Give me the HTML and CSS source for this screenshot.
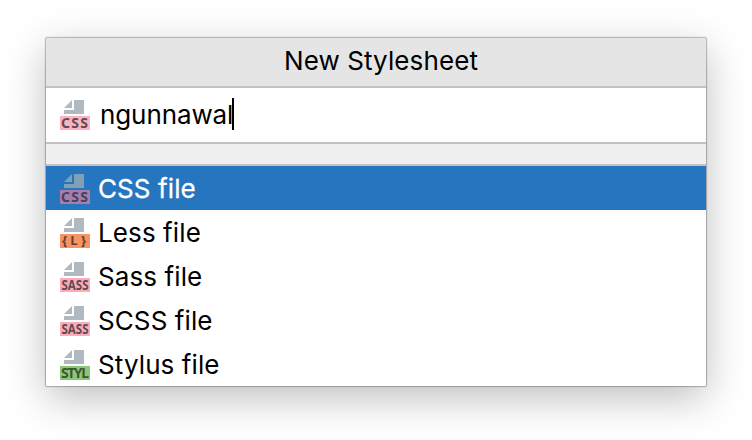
FILE: index.html
```html
<!DOCTYPE html>
<html lang="en">
<head>
<meta charset="utf-8">
<title>New Stylesheet</title>
<link rel="stylesheet" href="styles.css">
</head>
<body>
<svg width="0" height="0" class="defs" aria-hidden="true">
  <symbol id="page" viewBox="0 0 30 16"><path d="M14 0H24V14H4V10H14ZM12 0V8H4Z"/></symbol>
</svg>
<main class="popup">
  <header class="title">New Stylesheet</header>
  <div class="field">
    <svg class="icon css" viewBox="0 0 30 30"><use href="#page" width="30" height="16"/><rect y="16" width="30" height="14"/><text x="1" y="28" textLength="27">CSS</text></svg>
    <span class="name">ngunnawal</span><span class="caret"></span>
  </div>
  <div class="strip"></div>
  <ul class="list">
    <li class="row selected"><svg class="icon css" viewBox="0 0 30 30"><use href="#page" width="30" height="16"/><rect y="16" width="30" height="14"/><text x="1" y="28" textLength="27">CSS</text></svg><span>CSS file</span></li>
    <li class="row"><svg class="icon less" viewBox="0 0 30 30"><use href="#page" width="30" height="16"/><rect y="16" width="30" height="14"/><text x="2" y="27" textLength="24">{L}</text></svg><span>Less file</span></li>
    <li class="row"><svg class="icon sass" viewBox="0 0 30 30"><use href="#page" width="30" height="16"/><rect y="16" width="30" height="14"/><text x="1.5" y="28" textLength="27" lengthAdjust="spacingAndGlyphs">SASS</text></svg><span>Sass file</span></li>
    <li class="row"><svg class="icon sass" viewBox="0 0 30 30"><use href="#page" width="30" height="16"/><rect y="16" width="30" height="14"/><text x="1.5" y="28" textLength="27" lengthAdjust="spacingAndGlyphs">SASS</text></svg><span>SCSS file</span></li>
    <li class="row"><svg class="icon styl" viewBox="0 0 30 30"><use href="#page" width="30" height="16"/><rect y="16" width="30" height="14"/><text x="1" y="28" textLength="28">STYL</text></svg><span>Stylus file</span></li>
  </ul>
</main>
</body>
</html>
```
FILE: styles.css
```css
* { box-sizing: border-box; }
body {
  margin: 0;
  height: 440px;
  overflow: hidden;
  background: #fff;
  color: #000;
  font: 26px/44px Inter, sans-serif;
}
.defs { display: block; }
.popup {
  width: 660px;
  height: 348px;
  margin: 38px 46px 0;
  background: #fff;
  border-radius: 1px;
  box-shadow: 0 0 1px 1px rgba(0, 0, 0, .27), 0 12px 42px rgba(0, 0, 0, .26);
}
.title {
  height: 50px;
  padding-left: 10px;
  line-height: 46px;
  text-align: center;
  letter-spacing: .1px;
  background: #e5e5e5;
  border-bottom: 2px solid #c2c2c2;
}
.field {
  display: flex;
  align-items: center;
  height: 56px;
  padding-left: 14px;
  border-bottom: 2px solid #c2c2c2;
}
.name { margin-left: 10px; letter-spacing: -.1px; }
.caret { width: 2px; height: 32px; margin: 0 0 2px -1px; background: #000; }
.strip { height: 22px; background: #f0f0f0; border-bottom: 2px solid #c4c4c4; }
.list { margin: 0; padding: 0; list-style: none; }
.row {
  display: flex;
  align-items: center;
  gap: 8px;
  height: 44px;
  padding: 2px 0 0 14px;
  letter-spacing: .1px;
}
.selected {
  background: #2675bf;
  color: #fff;
  -webkit-text-stroke: .3px #fff;
}
.icon {
  flex: none;
  width: 30px;
  height: 30px;
  overflow: visible;
  fill: #afb9bf;
  -webkit-text-stroke: 0;
}
.icon text { font: 700 14px "Noto Sans", sans-serif; letter-spacing: 0; fill: #5f4b51; }
.css rect { fill: #fbb3c2; }
.less rect { fill: #f69463; }
.less text { font-size: 13px; fill: #63402f; }
.sass rect { fill: #fbabba; }
.styl rect { fill: #8cc777; }
.styl text { fill: #3c5733; }
.selected .icon { fill: #819fb5; }
.selected .icon rect { fill: #a57eac; }
.selected .icon text { fill: #493f63; }
```
